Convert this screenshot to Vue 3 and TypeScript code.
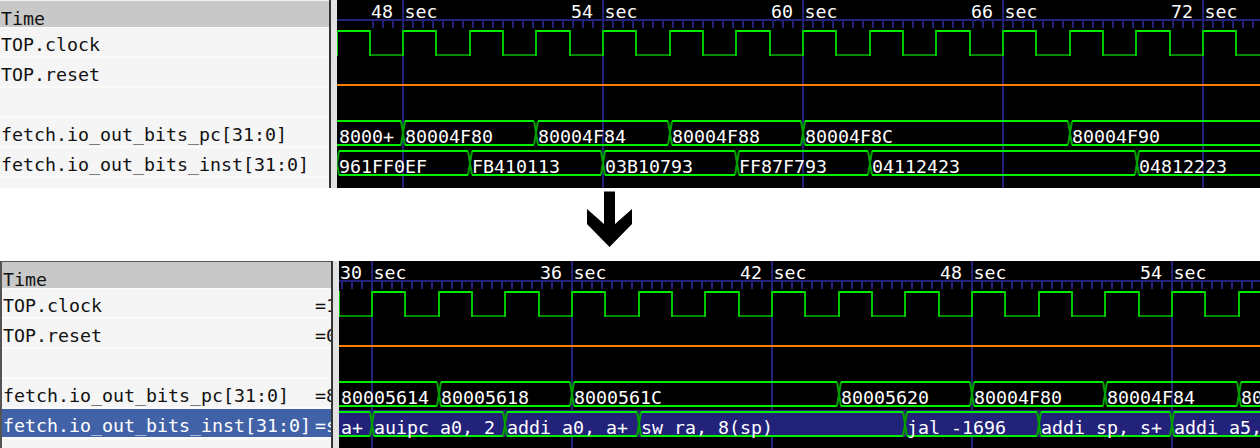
<template>
  <div class="page">
    <section v-for="p in panels" :key="p.id" class="panel" :class="p.id">
      <div class="signals">
        <div class="time">Time</div>
        <div
          v-for="s in p.signals"
          :key="s.name + s.value"
          class="row"
          :class="{ selected: s.selected }"
        >
          <span>{{ s.name }}</span>
          <span v-if="s.value" class="value">{{ s.value }}</span>
        </div>
      </div>
      <div class="gutter"></div>
      <svg class="waves" :viewBox="`${p.left} 0 ${1260 - p.left} ${p.height}`" :height="p.height">
        <rect :x="p.left" y="19" :width="1260 - p.left" height="2" class="grid" />
        <rect v-for="x in ticks(p)" :key="x" :x="x - 1" y="19" width="2" height="9" class="grid" />
        <rect v-if="p.selectedFill" :x="p.left" y="149" :width="1260 - p.left" height="27" class="grid" />
        <rect v-for="x in majors(p)" :key="'m' + x" :x="x - 1" y="0" width="2" :height="p.height" class="grid" />

        <g v-for="(l, i) in p.labels" :key="l" class="mono">
          <text :x="p.firstMajor + i * 200 - 32" y="18">{{ l }}</text>
          <text :x="p.firstMajor + i * 200 + 1.5" y="18">sec</text>
        </g>

        <path :d="clock(p).high" class="hi" />
        <path :d="clock(p).low" class="lo" />
        <path :d="clock(p).edges" class="edge" />
        <rect :x="p.left" y="84" :width="1260 - p.left" height="2" class="reset" />

        <g v-for="b in p.buses" :key="b.top">
          <g v-for="(seg, i) in b.segs" :key="seg.x">
            <path :d="crossing(seg.x, b.top)" class="cross" />
            <path :d="rails(seg.x, b.segs[i + 1]?.x ?? 1300, b.top)" class="hi" />
            <text class="mono" :x="Math.max(seg.x + 2, p.left + 2)" :y="b.top + 22">{{ seg.label }}</text>
          </g>
        </g>
      </svg>
    </section>

    <div class="arrow">
      <svg width="46" height="57" viewBox="0 0 46 57">
        <polygon points="17,0.5 28,0.5 28,33 45,18 45,33 22.5,56 0,33 0,18 17,33" />
      </svg>
    </div>
  </div>
</template>

<script setup lang="ts">
interface Seg {
  x: number
  label: string
}
interface Bus {
  top: number
  segs: Seg[]
}
interface Signal {
  name: string
  value?: string
  selected?: boolean
}
interface Panel {
  id: string
  left: number
  height: number
  firstMajor: number
  firstRise: number
  labels: string[]
  selectedFill: boolean
  signals: Signal[]
  buses: Bus[]
}

const STEP = 200 / 3 // one clock period
const HALF = STEP / 2

// builds bus segments, transitions are counted in clock periods
const segs = (start: number, items: [number, string][]): Seg[] =>
  items.map(([n, label]) => ({ x: Math.round(start + n * STEP), label }))

const panels: Panel[] = [
  {
    id: 'before',
    left: 337,
    height: 188,
    firstMajor: 403,
    firstRise: 403 - STEP,
    labels: ['48', '54', '60', '66', '72'],
    selectedFill: false,
    signals: [
      { name: 'TOP.clock' },
      { name: 'TOP.reset' },
      { name: '' },
      { name: 'fetch.io_out_bits_pc[31:0]' },
      { name: 'fetch.io_out_bits_inst[31:0]' },
    ],
    buses: [
      {
        top: 121,
        segs: segs(403, [
          [-2, '8000+'],
          [0, '80004F80'],
          [2, '80004F84'],
          [4, '80004F88'],
          [6, '80004F8C'],
          [10, '80004F90'],
        ]),
      },
      {
        top: 151,
        segs: segs(470 - 2 * STEP, [
          [0, '961FF0EF'],
          [2, 'FB410113'],
          [4, '03B10793'],
          [6, 'FF87F793'],
          [8, '04112423'],
          [12, '04812223'],
        ]),
      },
    ],
  },
  {
    id: 'after',
    left: 339,
    height: 187,
    firstMajor: 372,
    firstRise: 372 - STEP,
    labels: ['30', '36', '42', '48', '54'],
    selectedFill: true,
    signals: [
      { name: 'TOP.clock', value: '=1' },
      { name: 'TOP.reset', value: '=0' },
      { name: '' },
      { name: 'fetch.io_out_bits_pc[31:0]', value: '=80005620' },
      { name: 'fetch.io_out_bits_inst[31:0]', value: '=sw ra, 8(sp)', selected: true },
    ],
    buses: [
      {
        top: 121,
        segs: segs(372 + STEP, [
          [-2, '80005614'],
          [0, '80005618'],
          [2, '8000561C'],
          [6, '80005620'],
          [8, '80004F80'],
          [10, '80004F84'],
          [12, '80004F88'],
        ]),
      },
      {
        top: 151,
        segs: segs(372, [
          [-2, 'a+'],
          [0, 'auipc a0, 2'],
          [2, 'addi a0, a+'],
          [4, 'sw ra, 8(sp)'],
          [8, 'jal -1696'],
          [10, 'addi sp, s+'],
          [12, 'addi a5, a5'],
        ]),
      },
    ],
  },
]

const majors = (p: Panel) => p.labels.map((_, i) => p.firstMajor + i * 200)

const ticks = (p: Panel) => {
  const out: number[] = []
  for (let x = p.firstMajor - 30; x < 1260; x += 10) out.push(x)
  return out
}

function clock(p: Panel) {
  let high = ''
  let low = ''
  let edges = ''
  for (let r = p.firstRise; r < 1260; r += STEP) {
    const up = Math.max(Math.round(r), p.left)
    const down = Math.round(r + HALF)
    const next = Math.round(r + STEP)
    high += `M${up} 31H${down}`
    low += `M${down} 55H${next}`
    edges += `M${up} 30V56M${down} 30V56`
  }
  return { high, low, edges }
}

const crossing = (x: number, top: number) =>
  `M${x - 2} ${top}L${x + 2} ${top + 24}M${x - 2} ${top + 24}L${x + 2} ${top}`

const rails = (from: number, to: number, top: number) =>
  `M${from + 2} ${top}H${to - 2}M${from + 2} ${top + 24}H${to - 2}`
</script>

<style>
html,
body {
  background: #fff;
  overflow: hidden;
}
</style>

<style scoped>
.page {
  position: relative;
  width: 1260px;
  height: 448px;
  display: flex;
  flex-direction: column;
  font-family: "DejaVu Sans Mono", monospace;
  font-size: 18.27px;
}

.panel {
  display: flex;
  background: #000;
}

.before {
  height: 188px;
}

.after {
  order: 2;
  height: 187px;
}

.arrow {
  order: 1;
  height: 73px;
  padding: 3px 0 0 587px;
  box-sizing: border-box;
}

.arrow svg {
  display: block;
}

.signals {
  background: #f5f5f5;
  color: #111;
  box-sizing: border-box;
  overflow: hidden;
}

.before .signals {
  width: 329px;
  padding-left: 1px;
}

.after .signals {
  width: 331px;
  padding-left: 1px;
  border-left: 2px solid #555;
}

.time {
  margin-left: -3px;
  padding: 8px 0 0 3px;
  height: 28px;
  box-sizing: border-box;
  line-height: 20px;
  background: #c8c8c8;
  border-top: 1px solid #f0f0f0;
  border-bottom: 1px solid #fbfbfb;
}

.after .time {
  border-top-color: #555;
}

.row {
  display: flex;
  margin-left: -3px;
  padding: 5px 0 0 3px;
  height: 30px;
  box-sizing: border-box;
  line-height: 23px;
  white-space: pre;
  border-bottom: 2px solid #fbfbfb;
}

.row.selected {
  background: #4262a8;
  color: #fff;
}

.value {
  margin-left: auto;
  width: 16px;
  flex: none;
  overflow: hidden;
}

.gutter {
  flex: none;
  width: 6px;
  background: #e2e2e2;
  border-left: 2px solid #333;
}

.waves {
  flex: 1;
  display: block;
  min-width: 0;
}

.grid {
  fill: #22227a;
}

.reset {
  fill: #ff8000;
}

.hi,
.lo,
.edge,
.cross {
  fill: none;
  stroke-width: 2;
}

.hi {
  stroke: #00ee00;
}

.lo {
  stroke: #008a00;
}

.edge {
  stroke: #00c800;
}

.cross {
  stroke: #00a000;
}

.mono {
  font-family: "DejaVu Sans Mono", monospace;
  font-size: 18.27px;
  fill: #fff;
}

.arrow polygon {
  fill: #000;
}
</style>
